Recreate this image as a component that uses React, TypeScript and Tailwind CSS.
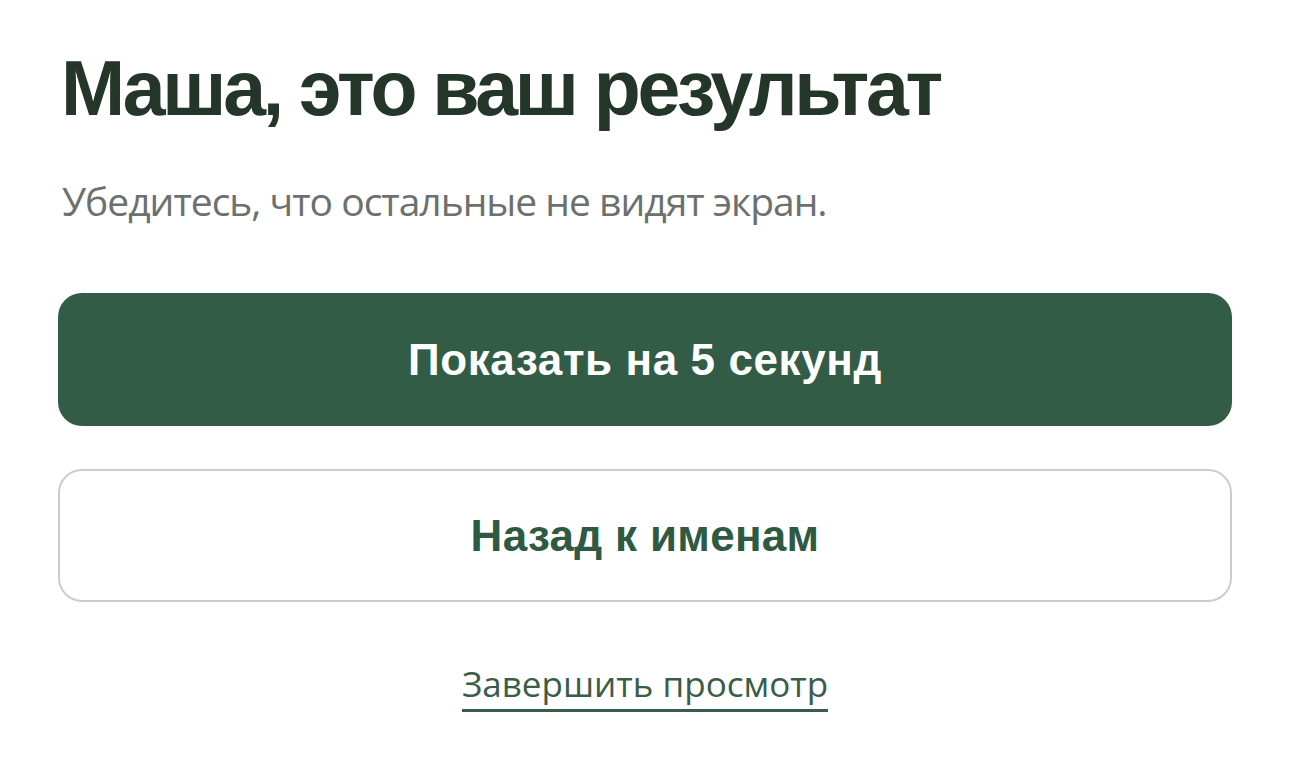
export default function App() {
  return (
    <div className="min-h-[784px] w-[1290px] bg-white px-[58px] pt-[40px]">
      <h1 className="pl-[3px] font-['Liberation_Sans',Arial,sans-serif] text-[77px] font-bold leading-[96px] tracking-[-3.3px] text-[#24352a]">
        Маша, это ваш результат
      </h1>
      <p className="mt-[43px] pl-[4px] font-['Open_Sans','Noto_Sans',sans-serif] text-[39px] leading-[44px] tracking-[-1px] text-[#6c706e]">
        Убедитесь, что остальные не видят экран.
      </p>
      <div className="mt-[70px] flex flex-col gap-[43px]">
        <button className="flex h-[133px] w-full items-center justify-center rounded-[24px] bg-[#325c45] font-['Liberation_Sans',Arial,sans-serif] text-[44px] font-bold tracking-[0.6px] text-white">
          Показать на 5 секунд
        </button>
        <button className="flex h-[133px] w-full items-center justify-center rounded-[24px] border-2 border-[#c6d0c8] bg-white font-['Liberation_Sans',Arial,sans-serif] text-[44px] font-bold tracking-[0.3px] text-[#2f5a42]">
          Назад к именам
        </button>
      </div>
      <div className="mt-[61px] flex justify-center">
        <a
          href="#"
          className="border-b-[3px] border-[#3b5c49] pb-[4px] font-['Open_Sans','Noto_Sans',sans-serif] text-[35px] leading-[42px] text-[#3b5c49]"
        >
          Завершить просмотр
        </a>
      </div>
    </div>
  );
}
